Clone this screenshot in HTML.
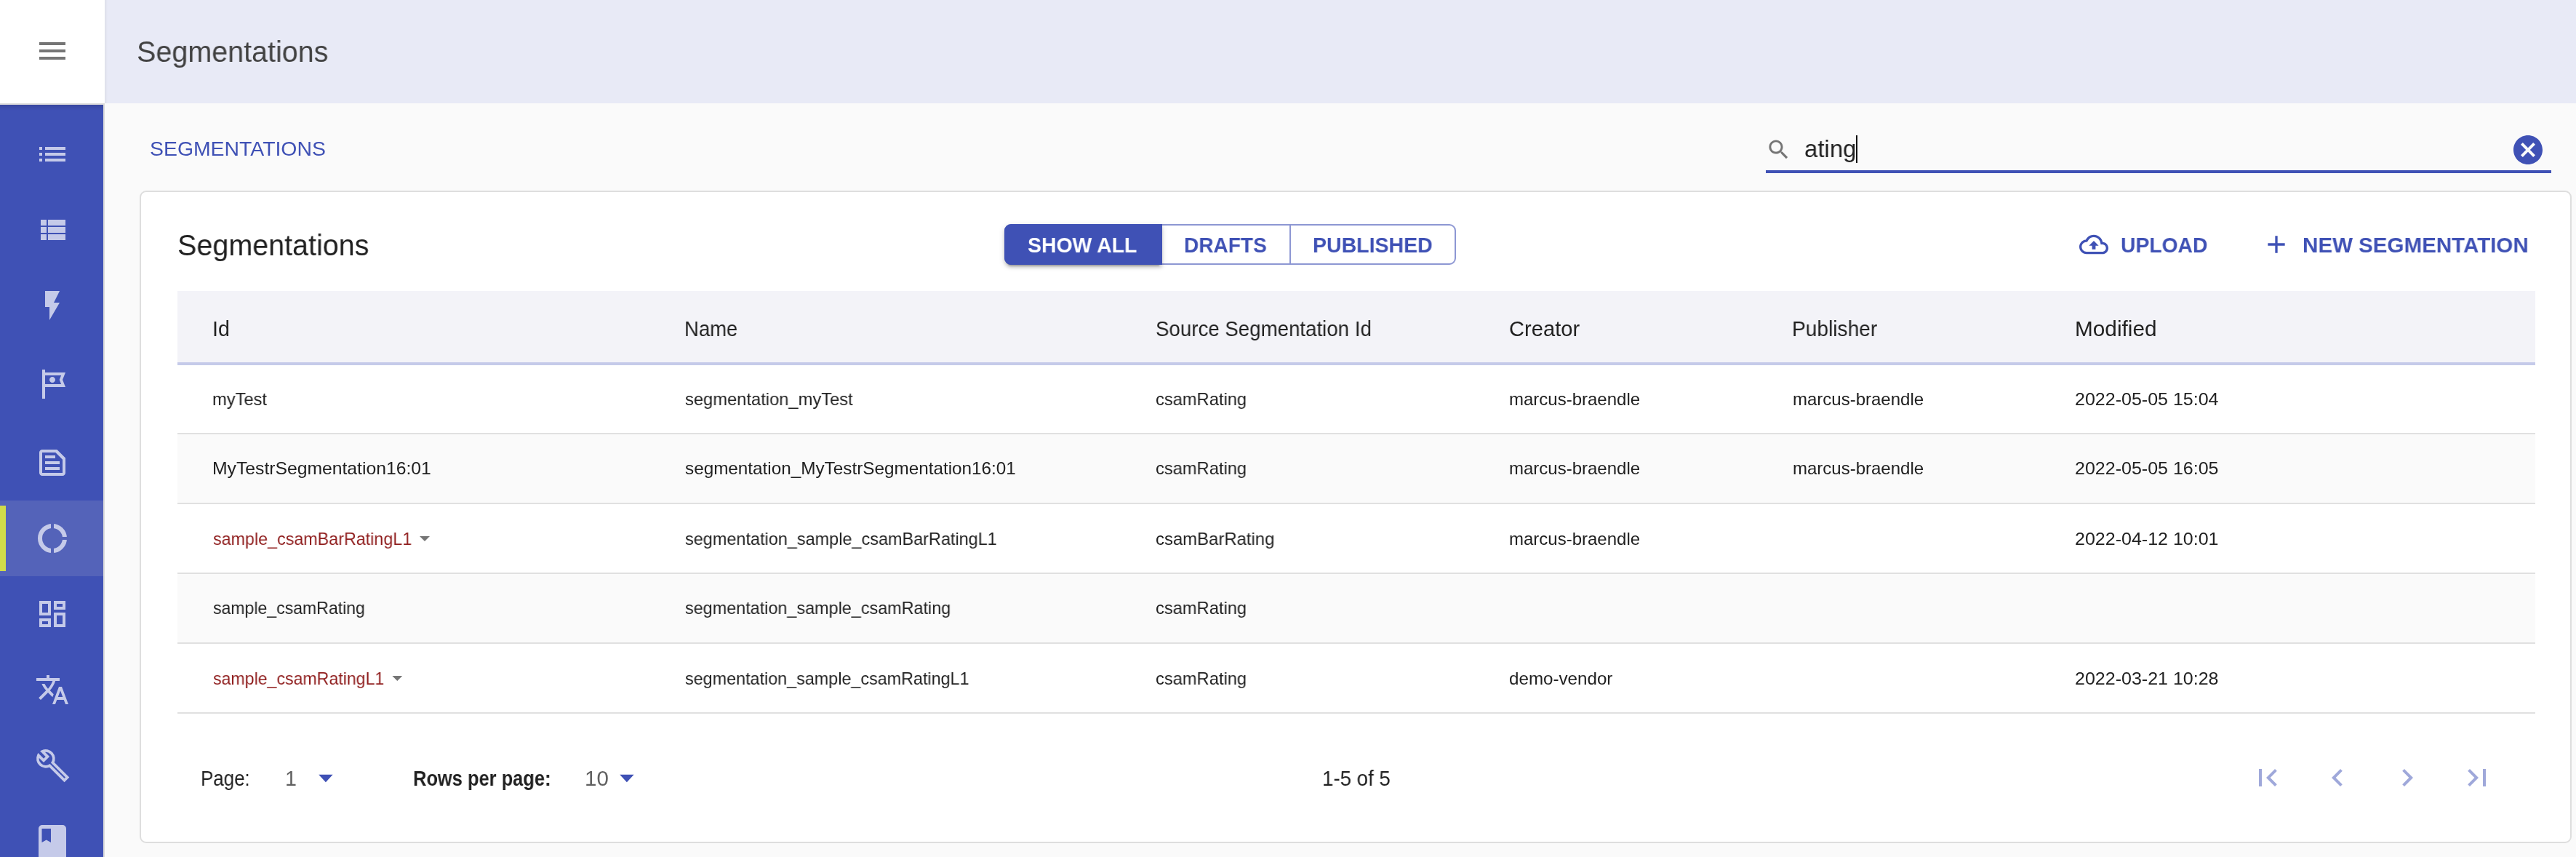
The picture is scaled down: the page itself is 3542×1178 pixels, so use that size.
<!DOCTYPE html>
<html><head><meta charset="utf-8"><title>Segmentations</title>
<style>
html,body{margin:0;padding:0;}
body{width:3542px;height:1178px;overflow:hidden;position:relative;background:#fafafa;font-family:"Liberation Sans",sans-serif;}
.a{position:absolute;}
.t{position:absolute;white-space:nowrap;will-change:transform;font-family:"Liberation Sans",sans-serif;}
svg{position:absolute;overflow:visible;}
</style></head><body>
<!-- header -->
<div class="a" style="left:144px;top:0;width:3398px;height:142px;background:#e8eaf6;"></div>
<div class="a" style="left:144px;top:0;width:4px;height:142px;background:linear-gradient(to right,rgba(0,0,0,0.05),rgba(0,0,0,0));"></div>
<div class="a" style="left:0;top:0;width:144px;height:142px;background:#fff;"></div>
<svg style="left:48px;top:46px" width="48" height="48" viewBox="0 0 24 24"><path fill="#757575" d="M3 18h18v-2H3v2zm0-5h18v-2H3v2zm0-7v2h18V6H3z"/></svg>
<!-- sidebar -->
<div class="a" style="left:0;top:142px;width:144px;height:1036px;background:#dcdcdc;"></div>
<div class="a" style="left:0;top:144px;width:142px;height:1034px;background:#3f51b5;"></div>
<div class="a" style="left:0;top:144px;width:142px;height:8px;background:linear-gradient(to bottom,rgba(0,0,0,0.12),rgba(0,0,0,0));"></div>
<div class="a" style="left:0;top:688px;width:142px;height:104px;background:#5463b9;"></div>
<div class="a" style="left:0;top:695px;width:8px;height:90px;background:#d0db4a;"></div>
<svg style="left:48px;top:188px" width="48" height="48" viewBox="0 0 24 24"><path fill="#c5cae9" d="M3 13h2v-2H3v2zm0 4h2v-2H3v2zm0-8h2V7H3v2zm4 4h14v-2H7v2zm0 4h14v-2H7v2zM7 7v2h14V7H7z"/></svg>
<svg style="left:48px;top:292px" width="48" height="48" viewBox="0 0 24 24"><path fill="#c5cae9" d="M4 14h4v-4H4v4zm0 5h4v-4H4v4zM4 9h4V5H4v4zm5 5h12v-4H9v4zm0 5h12v-4H9v4zM9 5v4h12V5H9z"/></svg>
<svg style="left:48px;top:396px" width="48" height="48" viewBox="0 0 24 24"><path fill="#c5cae9" d="M7 2v11h3v9l7-12h-4l4-8z"/></svg>
<svg style="left:48px;top:504px" width="48" height="48" viewBox="0 0 24 24"><path fill="#c5cae9" fill-rule="evenodd" d="M21 4H7V2H5v20h2v-8h14l-2-5zM18.05 6L17.15 8.26L16.85 9L17.15 9.74L18.05 12H7V6zM14 9c0 1.1-.9 2-2 2s-2-.9-2-2 .9-2 2-2 2 .9 2 2z"/></svg>
<svg style="left:48px;top:612px" width="48" height="48" viewBox="0 0 24 24"><path fill="#c5cae9" fill-rule="evenodd" d="M5 3H15.2L21 8.8V19c0 1.1-.9 2-2 2H5c-1.1 0-2-.9-2-2V5c0-1.1.9-2 2-2zM5 5V19H19V9.83L14.17 5zM7 7h7v2H7zM7 11h10v2H7zM7 15h10v2H7z"/></svg>
<svg style="left:48px;top:716px" width="48" height="48" viewBox="0 0 24 24"><defs><mask id="rm"><rect x="0" y="0" width="24" height="24" fill="#fff"/><rect x="11" y="0" width="2" height="24" fill="#000"/><rect x="12" y="11" width="12" height="2" fill="#000"/></mask></defs><circle cx="12" cy="12" r="8.5" fill="none" stroke="#c5cae9" stroke-width="3" mask="url(#rm)"/></svg>
<svg style="left:48px;top:820px" width="48" height="48" viewBox="0 0 24 24"><path fill="#c5cae9" d="M19 5v2h-4V5h4M9 5v6H5V5h4m10 8v6h-4v-6h4M9 17v2H5v-2h4M21 3h-8v6h8V3zM11 3H3v10h8V3zm10 8h-8v10h8V11zm-10 4H3v6h8v-6z"/></svg>
<svg style="left:48px;top:924px" width="48" height="48" viewBox="0 0 24 24"><path fill="#c5cae9" d="M12.87 15.07l-2.54-2.51.03-.03c1.74-1.94 2.98-4.17 3.71-6.53H17V4h-7V2H8v2H1v1.99h11.17C11.5 7.92 10.44 9.75 9 11.35 8.07 10.32 7.3 9.19 6.69 8h-2c.73 1.63 1.73 3.17 2.98 4.56l-5.09 5.02L4 19l5-5 3.11 3.11.76-2.04zM18.5 10h-2L12 22h2l1.12-3h4.75L21 22h2l-4.5-12zm-2.62 7l1.62-4.33L19.12 17h-3.24z"/></svg>
<svg style="left:48px;top:1028px" width="48" height="48" viewBox="0 0 24 24"><g transform="translate(7.43 7.43) rotate(45)"><path fill="none" stroke="#c5cae9" stroke-width="1.9" d="M-5.13 -1.9A5.47 5.47 0 0 1 5.27 -1.45L19.6 -1.45L19.6 1.45L5.27 1.45A5.47 5.47 0 0 1 -5.13 1.9L-0.1 1.9L-0.1 -1.9Z"/></g></svg>
<svg style="left:48px;top:1120px" width="48" height="58" viewBox="0 0 48 58"><path fill="#c5cae9" fill-rule="evenodd" d="M10 14H38a5 5 0 0 1 5 5V70H5V19a5 5 0 0 1 5-5zM9.5 19V38L15.75 34.5L22 38V19z"/></svg>
<!-- content -->
<svg style="left:2428.3px;top:188px" width="35.3" height="35.3" viewBox="0 0 24 24"><path fill="#757575" d="M15.5 14h-.79l-.28-.27C15.41 12.59 16 11.11 16 9.5 16 5.91 13.09 3 9.5 3S3 5.91 3 9.5 5.91 16 9.5 16c1.61 0 3.09-.59 4.23-1.57l.27.28v.79l5 4.99L20.49 19l-4.99-5zm-6 0C7.01 14 5 11.99 5 9.5S7.01 5 9.5 5 14 7.01 14 9.5 11.99 14 9.5 14z"/></svg>
<div class="a" style="left:2552px;top:186px;width:2px;height:38px;background:#111;"></div>
<div class="a" style="left:2428px;top:234px;width:1080px;height:4px;background:#3f51b5;"></div>
<svg style="left:3452px;top:182px" width="48" height="48" viewBox="0 0 24 24"><path fill="#3f51b5" d="M12 2C6.47 2 2 6.47 2 12s4.47 10 10 10 10-4.47 10-10S17.53 2 12 2zm5 13.59L15.59 17 12 13.41 8.41 17 7 15.59 10.59 12 7 8.41 8.41 7 12 10.59 15.59 7 17 8.41 13.41 12 17 15.59z"/></svg>
<!-- card -->
<div class="a" style="left:192px;top:262px;width:3344px;height:897px;box-sizing:border-box;border:2px solid #dedede;border-radius:9px;background:#fff;"></div>
<!-- toggle group -->
<div class="a" style="left:1381px;top:308px;width:621px;height:56px;box-sizing:border-box;border:2px solid #8d97d3;border-radius:9px;"></div>
<div class="a" style="left:1773px;top:308px;width:2px;height:56px;background:#8d97d3;"></div>
<div class="a" style="left:1381px;top:308px;width:217px;height:56px;background:#3f51b5;border-radius:9px 0 0 9px;box-shadow:0 6px 2px -4px rgba(0,0,0,0.2),0 4px 4px 0 rgba(0,0,0,0.14),0 2px 10px 0 rgba(0,0,0,0.12);"></div>
<svg style="left:2859px;top:316.3px" width="40" height="40" viewBox="0 0 24 24"><path fill="#3f51b5" d="M19.35 10.04C18.67 6.59 15.64 4 12 4 9.11 4 6.6 5.64 5.35 8.04 2.34 8.36 0 10.91 0 14c0 3.31 2.69 6 6 6h13c2.76 0 5-2.24 5-5 0-2.64-2.05-4.78-4.65-4.96zM19 18H6c-2.21 0-4-1.79-4-4 0-2.05 1.53-3.76 3.56-3.97l1.07-.11.5-.95C8.08 7.14 9.94 6 12 6c2.62 0 4.88 1.86 5.39 4.43l.3 1.5 1.53.11c1.56.1 2.78 1.41 2.78 2.96 0 1.65-1.35 3-3 3zM8 13h2.55v3h2.9v-3H16l-4-4z"/></svg>
<svg style="left:3110px;top:316px" width="40" height="40" viewBox="0 0 24 24"><path fill="#3f51b5" d="M19 13h-6v6h-2v-6H5v-2h6V5h2v6h6v2z"/></svg>
<!-- table -->
<div class="a" style="left:244px;top:400px;width:3242px;height:98px;background:#f3f3f8;"></div>
<div class="a" style="left:244px;top:498px;width:3242px;height:4px;background:#c5cae9;"></div>
<div class="a" style="left:244px;top:597px;width:3242px;height:94px;background:#fafafa;"></div>
<div class="a" style="left:244px;top:789px;width:3242px;height:94px;background:#fafafa;"></div>
<div class="a" style="left:244px;top:595px;width:3242px;height:2px;background:#e0e0e0;"></div>
<div class="a" style="left:244px;top:691px;width:3242px;height:2px;background:#e0e0e0;"></div>
<div class="a" style="left:244px;top:787px;width:3242px;height:2px;background:#e0e0e0;"></div>
<div class="a" style="left:244px;top:883px;width:3242px;height:2px;background:#e0e0e0;"></div>
<div class="a" style="left:244px;top:979px;width:3242px;height:2px;background:#e0e0e0;"></div>
<svg style="left:0;top:0" width="3542" height="1178" viewBox="0 0 3542 1178">
<polygon fill="#757575" points="577,737 591,737 584,744"/>
<polygon fill="#757575" points="539.4,929 553.2,929 546.3,936"/>
<polygon fill="#3f51b5" points="438.2,1064.8 457.6,1064.8 447.9,1075.2"/>
<polygon fill="#3f51b5" points="852.2,1064.8 871.6,1064.8 861.9,1075.2"/>
</svg>
<svg style="left:3094px;top:1045px" width="48" height="48" viewBox="0 0 24 24"><path fill="#9fa8da" d="M18.41 16.59L13.82 12l4.59-4.59L17 6l-6 6 6 6zM6 6h2v12H6z"/></svg>
<svg style="left:3190px;top:1045px" width="48" height="48" viewBox="0 0 24 24"><path fill="#9fa8da" d="M15.41 7.41L14 6l-6 6 6 6 1.41-1.41L10.83 12z"/></svg>
<svg style="left:3286px;top:1045px" width="48" height="48" viewBox="0 0 24 24"><path fill="#9fa8da" d="M10 6L8.59 7.41 13.17 12l-4.58 4.59L10 18l6-6z"/></svg>
<svg style="left:3382px;top:1045px" width="48" height="48" viewBox="0 0 24 24"><path fill="#9fa8da" d="M5.59 7.41L10.18 12l-4.59 4.59L7 18l6-6-6-6zM16 6h2v12h-2z"/></svg>

<div class="t" style="left:188.2px;top:51.4px;font-size:40px;line-height:40px;font-weight:400;color:#424242;transform:scaleX(0.9874);transform-origin:0 0;">Segmentations</div>
<div class="t" style="left:205.8px;top:191.3px;font-size:28px;line-height:28px;font-weight:400;color:#3f51b5;transform:scaleX(1.0141);transform-origin:0 0;">SEGMENTATIONS</div>
<div class="t" style="left:2480.7px;top:187.0px;font-size:34px;line-height:34px;font-weight:400;color:#212121;transform:scaleX(0.9687);transform-origin:0 0;">ating</div>
<div class="t" style="left:244.1px;top:317.0px;font-size:40px;line-height:40px;font-weight:400;color:#212121;transform:scaleX(0.9874);transform-origin:0 0;">Segmentations</div>
<div class="t" style="left:1412.9px;top:322.2px;font-size:30px;line-height:30px;font-weight:700;color:#ffffff;transform:scaleX(0.9464);transform-origin:0 0;">SHOW ALL</div>
<div class="t" style="left:1627.9px;top:322.1px;font-size:30px;line-height:30px;font-weight:700;color:#3f51b5;transform:scaleX(0.9347);transform-origin:0 0;">DRAFTS</div>
<div class="t" style="left:1804.9px;top:322.1px;font-size:30px;line-height:30px;font-weight:700;color:#3f51b5;transform:scaleX(0.9497);transform-origin:0 0;">PUBLISHED</div>
<div class="t" style="left:2916.4px;top:321.9px;font-size:30px;line-height:30px;font-weight:700;color:#3f51b5;transform:scaleX(0.9424);transform-origin:0 0;">UPLOAD</div>
<div class="t" style="left:3165.6px;top:321.8px;font-size:30px;line-height:30px;font-weight:700;color:#3f51b5;transform:scaleX(0.9844);transform-origin:0 0;">NEW SEGMENTATION</div>
<div class="t" style="left:292.4px;top:437.9px;font-size:28.6px;line-height:28.6px;font-weight:400;color:#212121;">Id</div>
<div class="t" style="left:940.8px;top:437.9px;font-size:28.6px;line-height:28.6px;font-weight:400;color:#212121;transform:scaleX(0.9609);transform-origin:0 0;">Name</div>
<div class="t" style="left:1588.5px;top:437.9px;font-size:28.6px;line-height:28.6px;font-weight:400;color:#212121;transform:scaleX(0.9676);transform-origin:0 0;">Source Segmentation Id</div>
<div class="t" style="left:2075.0px;top:437.9px;font-size:28.6px;line-height:28.6px;font-weight:400;color:#212121;transform:scaleX(1.0198);transform-origin:0 0;">Creator</div>
<div class="t" style="left:2464.4px;top:437.9px;font-size:28.6px;line-height:28.6px;font-weight:400;color:#212121;transform:scaleX(0.9831);transform-origin:0 0;">Publisher</div>
<div class="t" style="left:2853.1px;top:437.9px;font-size:28.6px;line-height:28.6px;font-weight:400;color:#212121;transform:scaleX(1.0411);transform-origin:0 0;">Modified</div>
<div class="t" style="left:292.0px;top:536.6px;font-size:24px;line-height:24px;font-weight:400;color:#212121;transform:scaleX(0.9875);transform-origin:0 0;">myTest</div>
<div class="t" style="left:941.6px;top:536.6px;font-size:24px;line-height:24px;font-weight:400;color:#212121;transform:scaleX(0.9881);transform-origin:0 0;">segmentation_myTest</div>
<div class="t" style="left:1588.5px;top:536.6px;font-size:24px;line-height:24px;font-weight:400;color:#212121;transform:scaleX(0.9874);transform-origin:0 0;">csamRating</div>
<div class="t" style="left:2075.1px;top:536.6px;font-size:24px;line-height:24px;font-weight:400;color:#212121;">marcus-braendle</div>
<div class="t" style="left:2465.1px;top:536.6px;font-size:24px;line-height:24px;font-weight:400;color:#212121;">marcus-braendle</div>
<div class="t" style="left:2853.3px;top:536.6px;font-size:24px;line-height:24px;font-weight:400;color:#212121;transform:scaleX(1.0423);transform-origin:0 0;">2022-05-05 15:04</div>
<div class="t" style="left:292.0px;top:631.5px;font-size:24px;line-height:24px;font-weight:400;color:#212121;transform:scaleX(1.0295);transform-origin:0 0;">MyTestrSegmentation16:01</div>
<div class="t" style="left:941.6px;top:631.5px;font-size:24px;line-height:24px;font-weight:400;color:#212121;transform:scaleX(1.0115);transform-origin:0 0;">segmentation_MyTestrSegmentation16:01</div>
<div class="t" style="left:1588.5px;top:631.5px;font-size:24px;line-height:24px;font-weight:400;color:#212121;transform:scaleX(0.9874);transform-origin:0 0;">csamRating</div>
<div class="t" style="left:2075.1px;top:631.5px;font-size:24px;line-height:24px;font-weight:400;color:#212121;">marcus-braendle</div>
<div class="t" style="left:2465.1px;top:631.5px;font-size:24px;line-height:24px;font-weight:400;color:#212121;">marcus-braendle</div>
<div class="t" style="left:2853.3px;top:631.5px;font-size:24px;line-height:24px;font-weight:400;color:#212121;transform:scaleX(1.0423);transform-origin:0 0;">2022-05-05 16:05</div>
<div class="t" style="left:293.0px;top:728.7px;font-size:24px;line-height:24px;font-weight:400;color:#8f1d1d;transform:scaleX(0.9704);transform-origin:0 0;">sample_csamBarRatingL1</div>
<div class="t" style="left:941.6px;top:728.7px;font-size:24px;line-height:24px;font-weight:400;color:#212121;transform:scaleX(0.9770);transform-origin:0 0;">segmentation_sample_csamBarRatingL1</div>
<div class="t" style="left:1588.5px;top:728.7px;font-size:24px;line-height:24px;font-weight:400;color:#212121;transform:scaleX(0.9962);transform-origin:0 0;">csamBarRating</div>
<div class="t" style="left:2075.1px;top:728.7px;font-size:24px;line-height:24px;font-weight:400;color:#212121;">marcus-braendle</div>
<div class="t" style="left:2853.3px;top:728.7px;font-size:24px;line-height:24px;font-weight:400;color:#212121;transform:scaleX(1.0423);transform-origin:0 0;">2022-04-12 10:01</div>
<div class="t" style="left:293.0px;top:823.6px;font-size:24px;line-height:24px;font-weight:400;color:#212121;transform:scaleX(0.9603);transform-origin:0 0;">sample_csamRating</div>
<div class="t" style="left:941.6px;top:823.6px;font-size:24px;line-height:24px;font-weight:400;color:#212121;transform:scaleX(0.9742);transform-origin:0 0;">segmentation_sample_csamRating</div>
<div class="t" style="left:1588.5px;top:823.6px;font-size:24px;line-height:24px;font-weight:400;color:#212121;transform:scaleX(0.9874);transform-origin:0 0;">csamRating</div>
<div class="t" style="left:293.0px;top:920.7px;font-size:24px;line-height:24px;font-weight:400;color:#8f1d1d;transform:scaleX(0.9636);transform-origin:0 0;">sample_csamRatingL1</div>
<div class="t" style="left:941.6px;top:920.7px;font-size:24px;line-height:24px;font-weight:400;color:#212121;transform:scaleX(0.9725);transform-origin:0 0;">segmentation_sample_csamRatingL1</div>
<div class="t" style="left:1588.5px;top:920.7px;font-size:24px;line-height:24px;font-weight:400;color:#212121;transform:scaleX(0.9874);transform-origin:0 0;">csamRating</div>
<div class="t" style="left:2075.1px;top:920.7px;font-size:24px;line-height:24px;font-weight:400;color:#212121;transform:scaleX(1.0070);transform-origin:0 0;">demo-vendor</div>
<div class="t" style="left:2853.3px;top:920.7px;font-size:24px;line-height:24px;font-weight:400;color:#212121;transform:scaleX(1.0423);transform-origin:0 0;">2022-03-21 10:28</div>
<div class="t" style="left:276.1px;top:1056.0px;font-size:28.6px;line-height:28.6px;font-weight:400;color:#212121;transform:scaleX(0.9056);transform-origin:0 0;">Page:</div>
<div class="t" style="left:392.2px;top:1056.0px;font-size:28.6px;line-height:28.6px;font-weight:400;color:#616161;">1</div>
<div class="t" style="left:568.4px;top:1056.0px;font-size:28.6px;line-height:28.6px;font-weight:700;color:#212121;transform:scaleX(0.8898);transform-origin:0 0;">Rows per page:</div>
<div class="t" style="left:804.4px;top:1056.0px;font-size:28.6px;line-height:28.6px;font-weight:400;color:#616161;transform:scaleX(1.0311);transform-origin:0 0;">10</div>
<div class="t" style="left:1818.1px;top:1055.7px;font-size:28.6px;line-height:28.6px;font-weight:400;color:#212121;transform:scaleX(0.9674);transform-origin:0 0;">1-5 of 5</div>
</body></html>
